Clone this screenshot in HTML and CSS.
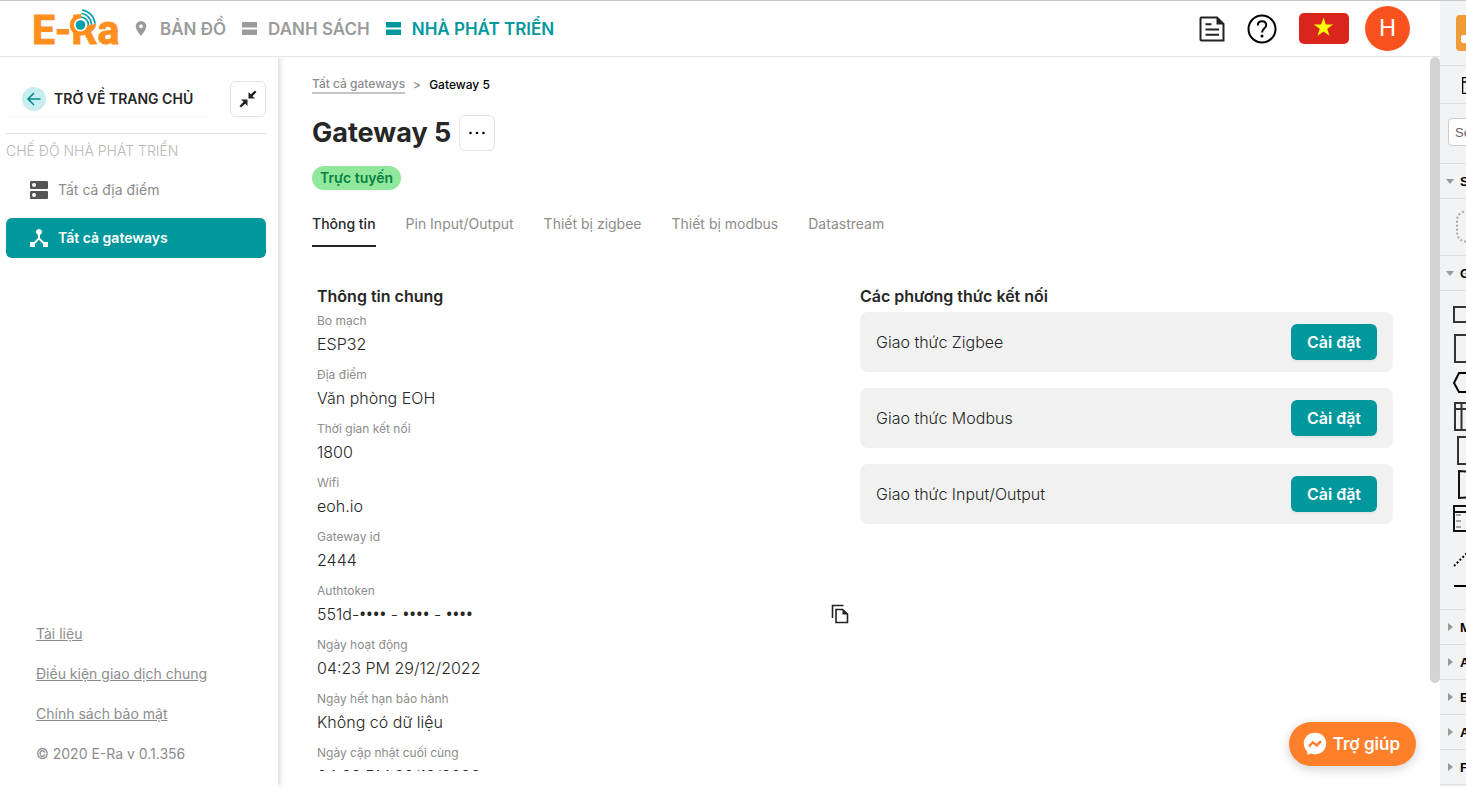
FILE: index.html
```html
<!DOCTYPE html>
<html lang="vi">
<head>
<meta charset="utf-8">
<title>E-Ra</title>
<link rel="stylesheet" href="styles.css">
</head>
<body>
<div class="screen">
  <div class="app">
    <header class="topbar">
      <a class="logo" href="#" aria-label="E-Ra">
        <span class="logo-text">E-Ra</span>
        <svg class="logo-signal" width="30" height="30" viewBox="0 0 30 30" fill="none">
          <circle cx="11.500" cy="16" r="8.500" stroke="#ff8f1f" stroke-width="4.500"/>
          <circle cx="11.500" cy="16" r="6.500" fill="#fff"/>
          <circle cx="11.500" cy="16" r="4.800" fill="#00a0ab"/>
          <path d="M12 8a8 8 0 0 1 7.500 8M12.500 4.500a11.500 11.500 0 0 1 10 11M13 1a15 15 0 0 1 13 13.500" stroke="#fff" stroke-width="4"/>
          <path d="M12 8a8 8 0 0 1 7.500 8M12.500 4.500a11.500 11.500 0 0 1 10 11M13 1a15 15 0 0 1 13 13.500" stroke="#00a0ab" stroke-width="1.700"/>
        </svg>
      </a>
      <nav class="topnav">
        <a href="#"><svg width="16" height="18" viewBox="0 0 16 18"><path fill="currentColor" fill-rule="evenodd" d="M8 1a5.300 5.300 0 0 1 5.300 5.300C13.300 10 8 16 8 16S2.700 10 2.700 6.300A5.300 5.300 0 0 1 8 1zm0 3.400a1.900 1.900 0 1 0 0 3.800 1.900 1.900 0 0 0 0-3.800z"/></svg>BẢN ĐỒ</a>
        <a href="#"><svg width="16" height="18" viewBox="0 0 16 18" fill="currentColor"><path d="M1 2h15v5.500H1zM1 9.500h15v5.500H1z"/></svg>DANH SÁCH</a>
        <a href="#" class="active"><svg width="16" height="18" viewBox="0 0 16 18" fill="currentColor"><path d="M1 2h15v5.500H1zM1 9.500h15v5.500H1z"/></svg>NHÀ PHÁT TRIỂN</a>
      </nav>
      <div class="tools">
        <button type="button" class="tool" aria-label="Tài liệu"><svg width="26" height="26" viewBox="0 0 26 26" fill="none"><path d="M2.500 1.500H18L24.500 8v16.500h-22a1 1 0 0 1-1-1v-21a1 1 0 0 1 1-1z" stroke="#222" stroke-width="2"/><path d="M17.500 1.500V8.500h7z" fill="#222"/><path d="M6.500 8.300h6M6.500 13.500h13.500M6.500 18.700h13.500" stroke="#222" stroke-width="2"/></svg></button>
        <button type="button" class="tool" aria-label="Hỏi đáp"><svg width="30" height="30" viewBox="0 0 30 30" fill="none" stroke="#000"><circle cx="15" cy="15" r="13.500" stroke-width="2"/><path d="M10.800 11.500C10.800 9 12.500 7.300 15 7.300s4.200 1.700 4.200 3.900c0 3.200-4.200 3.600-4.200 7.300" stroke-width="2"/><circle cx="15" cy="22" r="1.500" fill="#000" stroke="none"/></svg></button>
        <button type="button" class="tool flag" aria-label="Tiếng Việt"><svg width="50" height="31" viewBox="0 0 50 31"><rect width="50" height="31" rx="5" fill="#da251d"/><path fill="#ff0" d="M24.500 4.500l2.300 7h7.400l-6 4.300 2.300 7-6-4.300-6 4.300 2.300-7-6-4.300h7.400z"/></svg></button>
        <button type="button" class="avatar">H</button>
      </div>
    </header>
    <div class="body">
      <aside class="sidebar">
        <div class="side-head">
          <a class="back" href="#"><span class="back-icon"><svg width="16" height="16" viewBox="0 0 16 16" fill="none" stroke="#008a90" stroke-width="1.600"><path d="M14.500 8H2.500M8 2L2 8l6 6"/></svg></span>TRỞ VỀ TRANG CHỦ</a>
          <button type="button" class="square" aria-label="Thu gọn"><svg width="18" height="18" viewBox="0 0 18 18" fill="#222"><path d="M9.500 8.500V2l2.300 2.300L16 .500 17.500 2l-4 4.200L16 8.500zM8.500 9.500V16l-2.300-2.300L2 17.500.500 16l4-4.200L2 9.500z"/></svg></button>
        </div>
        <h2 class="side-label">CHẾ ĐỘ NHÀ PHÁT TRIỂN</h2>
        <nav class="side-nav">
          <a href="#"><svg width="18" height="18" viewBox="0 0 18 18"><path fill="#555" fill-rule="evenodd" d="M1 0h16a1 1 0 0 1 1 1v6a1 1 0 0 1-1 1H1a1 1 0 0 1-1-1V1a1 1 0 0 1 1-1zm3 2a2 2 0 1 0 0 4 2 2 0 0 0 0-4zM1 10h16a1 1 0 0 1 1 1v6a1 1 0 0 1-1 1H1a1 1 0 0 1-1-1v-6a1 1 0 0 1 1-1zm3 2a2 2 0 1 0 0 4 2 2 0 0 0 0-4z"/></svg>Tất cả địa điểm</a>
          <a href="#" class="active"><svg width="18" height="18" viewBox="0 0 18 18"><path fill="#fff" d="M14 13l-4-4V5.800a3 3 0 1 0-2 0V9l-4 4H0v5h5v-3l4-4.300 4 4.300v3h5v-5z"/></svg>Tất cả gateways</a>
        </nav>
        <footer class="side-foot">
          <a href="#">Tài liệu</a>
          <a href="#">Điều kiện giao dịch chung</a>
          <a href="#">Chính sách bảo mật</a>
          <span>© 2020 E-Ra v 0.1.356</span>
        </footer>
      </aside>
      <main class="main">
        <div class="crumbs"><a href="#">Tất cả gateways</a><span class="sep">&gt;</span><span class="here">Gateway 5</span></div>
        <div class="title-row">
          <h1>Gateway 5</h1>
          <button type="button" class="square" aria-label="Thêm"><svg width="18" height="4" viewBox="0 0 18 4" fill="#000"><circle cx="2.500" cy="2" r="1.300"/><circle cx="9" cy="2" r="1.300"/><circle cx="15.500" cy="2" r="1.300"/></svg></button>
        </div>
        <span class="badge">Trực tuyến</span>
        <nav class="tabs">
          <a href="#" class="active">Thông tin</a>
          <a href="#">Pin Input/Output</a>
          <a href="#">Thiết bị zigbee</a>
          <a href="#">Thiết bị modbus</a>
          <a href="#">Datastream</a>
        </nav>
        <div class="columns">
          <section class="col">
            <h3>Thông tin chung</h3>
            <dl class="info">
              <div><dt>Bo mạch</dt><dd>ESP32</dd></div>
              <div><dt>Địa điểm</dt><dd>Văn phòng EOH</dd></div>
              <div><dt>Thời gian kết nối</dt><dd>1800</dd></div>
              <div><dt>Wifi</dt><dd>eoh.io</dd></div>
              <div><dt>Gateway id</dt><dd>2444</dd></div>
              <div><dt>Authtoken</dt><dd><span>551d-<span class="dots">••••</span> - <span class="dots">••••</span> - <span class="dots">••••</span></span><button type="button" class="copy" aria-label="Sao chép"><svg width="22" height="22" viewBox="0 0 22 22" fill="none" stroke="#222" stroke-width="1.600"><path d="M4.500 15V2.500h11"/><path d="M8 6.500h6.500L19.500 11v8.500H8z"/><path d="M14.500 6v5.500H20z" fill="#222" stroke="none"/></svg></button></dd></div>
              <div><dt>Ngày hoạt động</dt><dd>04:23 PM 29/12/2022</dd></div>
              <div><dt>Ngày hết hạn bảo hành</dt><dd>Không có dữ liệu</dd></div>
              <div><dt>Ngày cập nhật cuối cùng</dt><dd>04:23 PM 29/12/2022</dd></div>
            </dl>
          </section>
          <section class="col">
            <h3>Các phương thức kết nối</h3>
            <div class="cards">
              <div class="card">Giao thức Zigbee<button type="button">Cài đặt</button></div>
              <div class="card">Giao thức Modbus<button type="button">Cài đặt</button></div>
              <div class="card">Giao thức Input/Output<button type="button">Cài đặt</button></div>
            </div>
          </section>
        </div>
      </main>
      <div class="track"><div class="thumb"></div></div>
    </div>
    <button type="button" class="help"><svg width="24" height="24" viewBox="0 0 24 24"><path fill="#fff" d="M12 .800C5.500.800.800 5.500.800 11.600c0 3.300 1.300 6.100 3.500 8.100l.1 3.400 3.200-1.500c1.400.5 2.800.8 4.400.8 6.500 0 11.200-4.700 11.200-10.800S18.500.800 12 .800z"/><path d="M6 14.500l3.800-4.200 4 3 4.200-4.200" fill="none" stroke="#ff7f2a" stroke-width="2.400"/></svg>Trợ giúp</button>
  </div>
  <aside class="shapes">
    <div class="shapes-logo"><svg width="26" height="36" viewBox="0 0 26 36"><rect width="36" height="36" rx="4" fill="#f09a38"/><rect x="5" y="20" width="12" height="8" rx="2" fill="#fff"/></svg></div>
    <div class="shapes-tool"><svg width="20" height="17" viewBox="0 0 20 17" fill="none" stroke="#000"><path d="M.500.500h19v16H.500zM.500 5h19" stroke-width="1.500"/></svg></div>
    <div class="shapes-search"><input type="text" value="Se" aria-label="Search"></div>
    <button type="button" class="group open">S</button>
    <div class="scratch"><svg width="24" height="34" viewBox="0 0 24 34"><rect x="2" y="1.500" width="60" height="30" rx="9" fill="none" stroke="#aaa" stroke-width="2" stroke-dasharray="2 2"/></svg></div>
    <button type="button" class="group open">G</button>
    <div class="palette"><svg width="26" height="318" viewBox="1440 291 26 318" fill="none" stroke="#333" stroke-width="2">
      <path d="M1475 307h-21v15h21M1475 335h-20v27h20"/>
      <path d="M1475 373h-16l-5 10 5 9h16" stroke="#000"/>
      <path d="M1475 403h-20v27h20M1455 409h20M1461.500 403v27M1475 437h-17v27h17"/>
      <path d="M1475 472l-16-1v27l16-1M1475 506h-21v25h21M1454 512h20" stroke="#111"/>
      <path d="M1456 515h5M1456 521h5M1456 527h5" stroke="#555" stroke-width="1"/>
      <path d="M1454 566l14-14" stroke="#000" stroke-dasharray="2 2"/>
      <path d="M1454 586h14" stroke="#000"/>
    </svg></div>
    <button type="button" class="group">M</button>
    <button type="button" class="group">A</button>
    <button type="button" class="group">B</button>
    <button type="button" class="group">A</button>
    <button type="button" class="group">F</button>
  </aside>
</div>
</body>
</html>
```
FILE: styles.css
```css
* { box-sizing: border-box; }
body {
  margin: 0;
  font-family: Inter, "Liberation Sans", sans-serif;
  font-size: 14px;
  color: #262626;
  background: #fff;
}
a { color: inherit; text-decoration: none; }
button {
  font: inherit;
  color: inherit;
  border: 0;
  padding: 0;
  background: none;
  cursor: pointer;
}
h1, h2, h3, dl, dd { margin: 0; }
svg { display: block; flex: none; }

.screen {
  display: flex;
  height: 100vh;
  border-top: 1px solid #c8c8c8;
  overflow: hidden;
}
.app {
  position: relative;
  flex: 1;
  min-width: 0;
  display: flex;
  flex-direction: column;
}

/* Top bar */
.topbar {
  position: relative;
  z-index: 1;
  flex: none;
  display: flex;
  align-items: center;
  height: 56px;
  padding: 0 30px 0 32px;
  border-bottom: 1px solid #e4e4e4;
  background: #fff;
}
.logo {
  position: relative;
  width: 85px;
  margin-right: 16px;
  color: #ff8f1f;
}
.logo-text {
  display: block;
  padding-top: 3px;
  font: bold 41px/48px Roboto, sans-serif;
  -webkit-text-stroke: 1px #ff8f1f;
  white-space: nowrap;
}
.logo-signal { position: absolute; left: 37px; top: 6px; }
.topnav {
  display: flex;
  gap: 15px;
  font-size: 17px;
  line-height: 20px;
  font-weight: 600;
  color: #9b9b9b;
}
.topnav a { display: flex; align-items: center; gap: 11px; white-space: nowrap; }
.topnav .active { color: #00979d; }
.tools { display: flex; align-items: center; margin-left: auto; }
.tool { margin-right: 22px; }
.flag { margin-right: 16px; }
.avatar {
  width: 45px;
  height: 45px;
  border-radius: 50%;
  background: #f9521f;
  color: #fff;
  font: 24px/45px Roboto, sans-serif;
}

.body { flex: 1; min-height: 0; display: flex; }

/* Sidebar */
.sidebar {
  flex: none;
  width: 278px;
  padding: 24px 12px 23px 6px;
  display: flex;
  flex-direction: column;
  box-shadow: 1px 0 6px rgba(0, 0, 0, .2);
}
.side-head {
  display: flex;
  justify-content: space-between;
  padding-bottom: 16px;
  border-bottom: 1px solid #e0e0e0;
}
.back {
  width: 202px;
  padding-left: 16px;
  display: flex;
  align-items: center;
  gap: 8px;
  font-weight: 600;
  line-height: 20px;
  border-bottom: 1px solid #f6f6f6;
}
.back-icon {
  width: 24px;
  height: 24px;
  border-radius: 50%;
  background: #c9eeef;
  display: grid;
  place-items: center;
}
.square {
  width: 36px;
  height: 36px;
  border: 1px solid #e2e2e2;
  border-radius: 6px;
  display: grid;
  place-items: center;
}
.side-label {
  padding: 7px 0 9px;
  font-size: 14px;
  line-height: 20px;
  font-weight: 300;
  color: #b8b8b8;
}
.side-nav { display: grid; gap: 8px; }
.side-nav a {
  display: flex;
  align-items: center;
  gap: 10px;
  height: 40px;
  padding-left: 24px;
  border-radius: 6px;
  line-height: 20px;
  color: #8c8c8c;
}
.side-nav .active { background: #00979d; color: #fff; font-weight: 600; }
.side-foot {
  margin-top: auto;
  padding-left: 30px;
  display: grid;
  justify-items: start;
  gap: 20px;
  line-height: 20px;
  color: #8c8c8c;
}
.side-foot a { text-decoration: underline; }

/* Content */
.main {
  flex: 1;
  min-width: 0;
  padding: 19px 32px 0 34px;
  margin-bottom: 16px;
  overflow: hidden;
}
.crumbs {
  display: flex;
  gap: 8px;
  font-size: 12px;
  line-height: 18px;
  font-weight: 500;
  color: #8c8c8c;
}
.crumbs a { border-bottom: 2px solid #c4c4c4; line-height: 16px; }
.crumbs .here { color: #000; }
.title-row {
  display: flex;
  align-items: center;
  gap: 8px;
  margin: 21px 0 15px;
}
h1 { font-size: 27px; line-height: 36px; font-weight: 700; }
.badge {
  display: inline-block;
  padding: 0 8px;
  line-height: 24px;
  border-radius: 12px;
  background: #8fe89b;
  color: #0a8043;
  font-weight: 600;
}
.tabs {
  display: flex;
  gap: 30px;
  margin-top: 16px;
  color: #8c8c8c;
}
.tabs a { line-height: 36px; padding-bottom: 3px; border-bottom: 2px solid transparent; }
.tabs .active { color: #262626; font-weight: 500; border-color: #262626; }
.columns {
  display: grid;
  grid-template-columns: 1fr 1fr;
  margin-top: 37px;
}
.col { padding: 0 5px; }
h3 { font-size: 16px; line-height: 24px; font-weight: 600; margin-bottom: 4px; }
.info { display: grid; gap: 8px; }
dt { font-size: 12px; line-height: 18px; color: #8c8c8c; }
dd {
  display: flex;
  align-items: center;
  justify-content: space-between;
  font-size: 16px;
  font-weight: 300;
  line-height: 28px;
}
.dots { font: 18px/20px "Noto Sans", sans-serif; }
.cards { display: grid; gap: 16px; }
.card {
  display: flex;
  align-items: center;
  justify-content: space-between;
  height: 60px;
  padding: 0 16px;
  border-radius: 8px;
  background: #f1f1f1;
  font-size: 16px;
  font-weight: 300;
}
.card button {
  height: 36px;
  padding: 0 16px;
  border-radius: 6px;
  background: #00979d;
  color: #fff;
  font-weight: 600;
  box-shadow: 0 2px 2px rgba(0, 0, 0, .05);
}
.track { flex: none; width: 10px; }
.thumb { height: 626px; border-radius: 5px; background: #d0d4d7; }

.help {
  position: absolute;
  right: 24px;
  bottom: 21px;
  display: flex;
  align-items: center;
  gap: 6px;
  height: 44px;
  padding: 0 16px 0 14px;
  border-radius: 22px;
  background: #ff7f2a;
  color: #fff;
  font-size: 17px;
  font-weight: 600;
  box-shadow: 0 3px 12px rgba(0, 0, 0, .18);
}

/* Shape library */
.shapes {
  flex: none;
  width: 26px;
  overflow: hidden;
  background: #f1f3f4;
  font-family: "Liberation Sans", sans-serif;
}
.shapes > * { border-bottom: 1px solid #dadce0; }
.shapes-logo { height: 65px; padding: 14px 0 0 16px; }
.shapes-tool { height: 38px; padding: 11px 0 0 22px; }
.shapes-search { height: 60px; padding: 14px 0 0 8px; }
.shapes-search input {
  width: 120px;
  height: 28px;
  padding: 0 6px;
  border: 1px solid #ccc;
  border-radius: 4px;
  font: 13px "Liberation Sans", sans-serif;
  color: #666;
  background: #fff;
}
.group {
  display: flex;
  align-items: center;
  gap: 7px;
  width: 100%;
  height: 35px;
  padding-left: 8px;
  font-size: 13px;
  font-weight: bold;
  color: #000;
}
.group::before {
  content: "";
  flex: none;
  border: 4px solid transparent;
  border-left: 5px solid #999;
  border-right: 0;
}
.group.open { gap: 6px; padding-left: 6px; }
.group.open::before {
  border: 4px solid transparent;
  border-top: 5px solid #999;
  border-bottom: 0;
}
.scratch { height: 57px; padding: 11px 0 0 15px; }
.palette { height: 319px; }
```
